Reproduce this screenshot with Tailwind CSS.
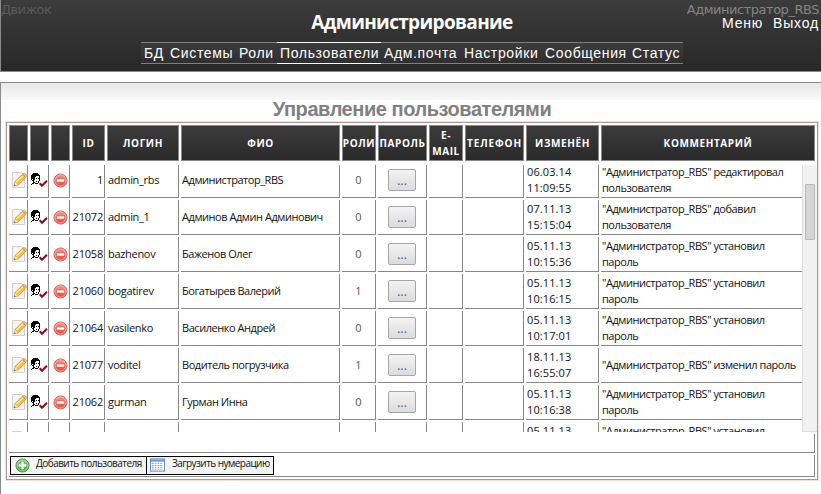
<!DOCTYPE html>
<html lang="ru">
<head>
<meta charset="utf-8">
<title>Администрирование</title>
<script src="https://cdn.jsdelivr.net/npm/@tailwindcss/browser@4"></script>
</head>
<body class="h-[494px] overflow-hidden bg-white font-['Open_Sans','Noto_Sans',sans-serif] text-[11px] leading-4 text-[#111]">
<svg class="absolute h-0 w-0">
  <defs>
    <linearGradient id="red" x1="0" y1="0" x2="0" y2="1"><stop offset="0" stop-color="#f39a90"/><stop offset="1" stop-color="#e4483c"/></linearGradient>
    <linearGradient id="green" x1="0" y1="0" x2="0" y2="1"><stop offset="0" stop-color="#8fce84"/><stop offset="1" stop-color="#43a03a"/></linearGradient>
    <symbol id="edit" viewBox="0 0 16 16">
      <path d="M1.500 .5h9l3 3v12h-12z" fill="#f5f5f5" stroke="#cfcfcf"/>
      <path d="M4 9.500 11.500 2.300 14.900 5.500 7.300 12.900 3 14z" fill="#f3bf45" stroke="#b98428" stroke-width=".7"/>
      <path d="M5.300 10 12 3.700" stroke="#fde9a0" stroke-width="1.400"/>
      <path d="M11.500 2.300 12.400 1.500q1.200-.4 2.200.6t.9 2.400l-.6 1z" fill="#e9b59a" stroke="#b98428" stroke-width=".5"/>
      <path d="M4 9.800 3 14l4-1z" fill="#f4dfc0"/><path d="m3.500 12.300-.5 1.700 1.700-.4z" fill="#444"/>
    </symbol>
    <symbol id="role" viewBox="0 0 18 16">
      <g shape-rendering="crispEdges" fill="#000">
        <path d="M3 1h5v1h1v1h1v2H9V4H6v1H5v2H4v1H3V7H2V6H1V3h1V2h1z"/>
        <path d="M1 6h1v2H1zM2 8h1v1H2zM3 8h1v2H3zM4 7h1v1H4zM6 6h1v1H6zM8 6h1v1H8zM9 5h1v4H9zM8 9h1v2H8zM6 9h1v1H6zM4 10h1v1H4zM5 11h3v1H5zM3 10h1v2H3zM2 11h1v1H2zM1 12h1v1H1z"/>
      </g>
      <path d="m9.700 11.300 2.300 2.500 4.900-5" fill="none" stroke="#8b0a14" stroke-width="2"/>
    </symbol>
    <symbol id="del" viewBox="0 0 16 16">
      <circle cx="8" cy="8" r="7" fill="url(#red)" stroke="#d4605a"/>
      <circle cx="8" cy="8" r="5.900" fill="none" stroke="#f9b8b2" stroke-width=".8"/>
      <rect x="3.800" y="6.500" width="8.400" height="3" rx=".7" fill="#fff" stroke="#cf4a42" stroke-width=".5"/>
    </symbol>
    <symbol id="add" viewBox="0 0 16 16">
      <circle cx="8" cy="8" r="7" fill="url(#green)" stroke="#3f9038"/>
      <circle cx="8" cy="8" r="5.900" fill="none" stroke="#b4e0ab" stroke-width=".8"/>
      <path d="M6.700 4h2.600v2.700H12v2.600H9.300V12H6.700V9.300H4V6.700h2.700z" fill="#fff"/>
    </symbol>
    <symbol id="grid" viewBox="0 0 16 14">
      <rect x=".5" y=".5" width="15" height="13" fill="#fff" stroke="#5c86bd"/>
      <rect x="1" y="1" width="14" height="2.500" fill="#6b9be0"/>
      <path d="M2 5.500h12M2 7.500h12M2 9.500h12M2 11.500h12" stroke="#8fa0b4" stroke-dasharray="2 1"/>
    </symbol>
  </defs>
</svg>

<header class="flex h-[72px] justify-between border-b border-l border-[#8a8a8a] bg-linear-to-b from-[#3c3c3c] to-[#282828]">
  <div class="w-[140px] pt-[2px] font-['DejaVu_Sans',sans-serif] text-[13px] tracking-[-0.6px] text-[#5a5a5a]">Движок</div>
  <div class="flex w-[542px] flex-col items-center pt-[10px]">
    <h1 class="h-[32px] whitespace-nowrap text-[19px] leading-[24px] font-bold tracking-[-0.65px] text-white">Администрирование</h1>
    <nav class="flex h-[22px] w-full bg-linear-to-b from-[#3c3c3c] to-[#2e2e2e] font-['Liberation_Sans',Arial,sans-serif] text-[14px] leading-[21px] tracking-[0.65px] whitespace-nowrap text-white *:border-y *:border-[#808080] *:pl-[3px]">
      <a class="w-[26px]">БД</a><a class="w-[69px]">Системы</a><a class="w-[41px]">Роли</a><a class="w-[104px] border-white!">Пользователи</a><a class="w-[80px]">Адм.почта</a><a class="w-[81px]">Настройки</a><a class="w-[87px]">Сообщения</a><a class="w-[54px]">Статус</a>
    </nav>
  </div>
  <div class="flex w-[138px] flex-col items-end pt-[2px] pr-[2px] whitespace-nowrap">
    <div class="h-[13px] font-['DejaVu_Sans',sans-serif] text-[13px] tracking-[-0.47px] text-[#858585]">Администратор_RBS</div>
    <div class="flex gap-[10px] font-['Liberation_Sans',Arial,sans-serif] text-[14px] tracking-[0.8px] text-white"><a>Меню</a><a>Выход</a></div>
  </div>
</header>

<main class="mt-[10px] h-[412px] border-t border-l border-[#8a8a8a]">
  <div class="h-[17px] bg-linear-to-b from-[#e8e8e8] to-[#f8f8f8]"></div>
  <h2 class="-mt-[1px] h-[22px] pl-[2px] text-center font-['Liberation_Sans',Arial,sans-serif] text-[20px] leading-[20px] font-bold tracking-[-0.45px] text-[#808080]">Управление пользователями</h2>
  <section class="ml-[4px] h-[360px] w-[814px] border border-[#f6dfdc]">
    <div class="h-full w-full border border-[#b09592] pt-[2px] pl-[2px]">
      <div class="flex h-[36px] gap-[2px] text-center text-[10px] font-bold tracking-[0.600px] whitespace-nowrap text-white *:flex *:items-center *:justify-center *:border *:border-[#888] *:bg-linear-to-b *:from-[#3c3c3c] *:to-[#2a2a2a]">
        <div class="w-[19px]"></div><div class="w-[19px]"></div><div class="w-[19px]"></div>
        <div class="w-[33px]">ID</div><div class="w-[72px]">ЛОГИН</div><div class="w-[159px]">ФИО</div>
        <div class="w-[34px]">РОЛИ</div><div class="w-[49px]">ПАРОЛЬ</div><div class="w-[34px]">E-<br>MAIL</div>
        <div class="w-[59px] tracking-[0.900px]">ТЕЛЕФОН</div><div class="w-[73px]">ИЗМЕНЁН</div><div class="w-[214px]">КОММЕНТАРИЙ</div>
      </div>
      <div class="mt-[4px] flex h-[267px] w-[808px] overflow-hidden">
        <div id="rows" class="-mt-[2px] flex w-[793px] flex-none flex-col gap-[2px]"></div>
        <div class="h-full w-[15px] border-b border-l border-[#ddd] bg-[#f1f1f1] pt-[19px] pl-[2px]"><div class="h-[56px] w-[10px] rounded-[1px] border border-[#b8b8b8] bg-[#d6d6d6]"></div></div>
      </div>
      <div class="mt-[2px] h-[19px] w-[806px] border-r border-b border-[#888]"></div>
      <div class="mt-[2px] flex h-[22px] w-[806px] border-r border-b border-[#888] pt-[1px] pl-[1px] text-[10px] leading-[13px] tracking-[-0.55px] whitespace-nowrap">
        <button class="flex h-[19px] w-[137px] border border-black bg-[#f4f4f4] pl-[4px]"><svg class="mt-[1px] h-[15px] w-[15px] flex-none"><use href="#add"/></svg><span class="ml-[6px]">Добавить пользователя</span></button>
        <button class="-ml-px flex h-[19px] w-[128px] border border-black bg-[#f4f4f4] pl-[3px]"><svg class="mt-[1px] h-[14px] w-[15px] flex-none"><use href="#grid"/></svg><span class="ml-[7px]">Загрузить нумерацию</span></button>
      </div>
    </div>
  </section>
</main>

<script>
const users = [
  ["1","admin_rbs","Администратор_RBS","0","06.03.14","11:09:55","редактировал пользователя"],
  ["21072","admin_1","Админов Админ Админович","0","07.11.13","15:15:04","добавил пользователя"],
  ["21058","bazhenov","Баженов Олег","0","05.11.13","10:15:36","установил пароль"],
  ["21060","bogatirev","Богатырев Валерий","1","05.11.13","10:16:15","установил пароль"],
  ["21064","vasilenko","Василенко Андрей","0","05.11.13","10:17:01","установил пароль"],
  ["21077","voditel","Водитель погрузчика","1","18.11.13","16:55:07","изменил пароль"],
  ["21062","gurman","Гурман Инна","0","05.11.13","10:16:38","установил пароль"],
  ["","","","","05.11.13","&nbsp;","установил пароль"]
];
document.getElementById("rows").innerHTML = users.map(u => `
<div class="flex h-[35px] flex-none gap-[2px] whitespace-nowrap *:flex *:items-center *:border-r *:border-b *:border-[#888]">
  <div class="w-[19px] pl-[2px]"><svg class="h-[16px] w-[16px] flex-none"><use href="#edit"/></svg></div>
  <div class="w-[19px]">${u[0] && '<svg class="h-[16px] w-[18px] flex-none"><use href="#role"/></svg>'}</div>
  <div class="w-[19px] pl-[2px]">${u[0] && '<svg class="h-[15px] w-[15px] flex-none"><use href="#del"/></svg>'}</div>
  <div class="w-[33px] justify-end pr-[1px] tracking-[-0.200px]">${u[0]}</div>
  <div class="w-[72px] pl-[1px] tracking-[-0.300px]">${u[1]}</div>
  <div class="w-[159px] pl-[1px] tracking-[-0.450px]">${u[2]}</div>
  <div class="w-[34px] justify-center text-[#555]">${u[3]}</div>
  <div class="w-[49px] justify-center">${u[0] && '<button class="h-[22px] w-[28px] rounded-[2px] border border-[#a6a6a6] bg-linear-to-b from-[#f3f3f3] to-[#dcdcdc] text-[13px] leading-[18px] text-[#2a6a9e]">...</button>'}</div>
  <div class="w-[34px]"></div>
  <div class="w-[59px]"></div>
  <div class="w-[73px] pl-[1px] tracking-[0.100px]"><span>${u[4]}<br>${u[5]}</span></div>
  <div class="w-[201px] border-r-0! pl-[1px] tracking-[-0.450px] whitespace-normal"><span>"Администратор_RBS" ${u[6]}</span></div>
</div>`).join("");
</script>
</body>
</html>
